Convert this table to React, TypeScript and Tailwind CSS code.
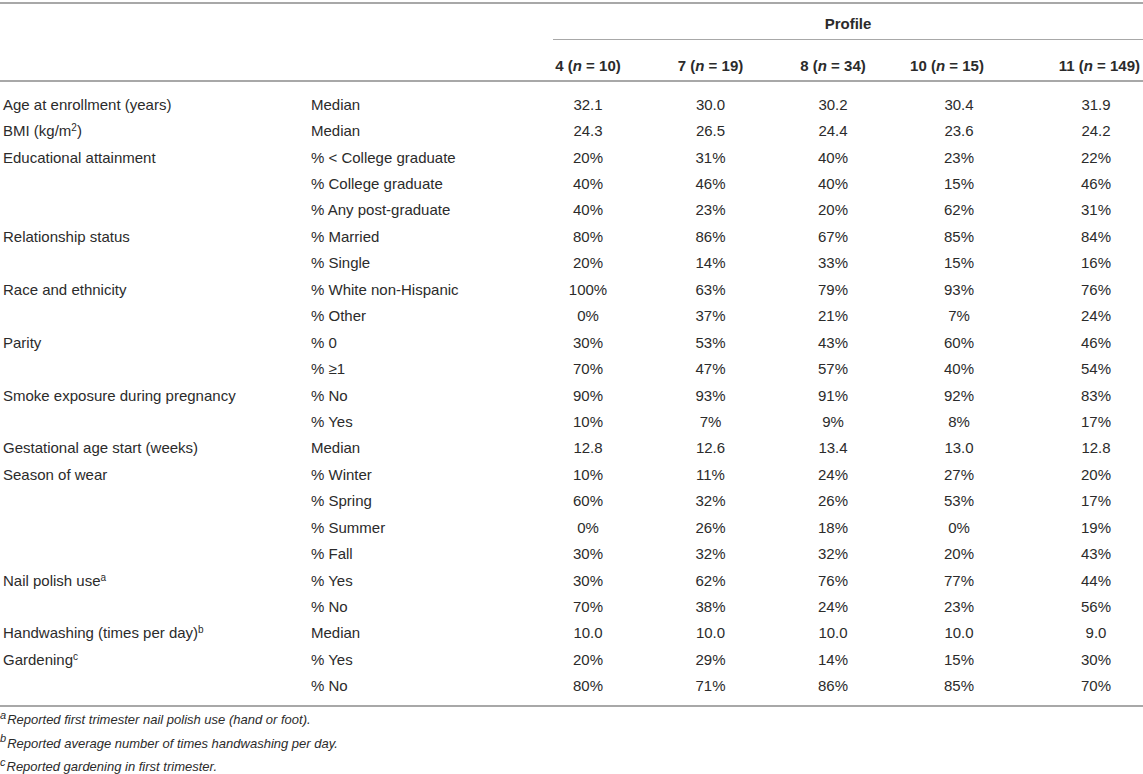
import type { ReactNode } from "react";

type Row = {
  label?: ReactNode;
  sub: ReactNode;
  values: string[];
};

const rows: Row[] = [
  { label: "Age at enrollment (years)", sub: "Median", values: ["32.1", "30.0", "30.2", "30.4", "31.9"] },
  {
    label: (
      <>
        BMI (kg/m<sup className="text-[10px]">2</sup>)
      </>
    ),
    sub: "Median",
    values: ["24.3", "26.5", "24.4", "23.6", "24.2"],
  },
  { label: "Educational attainment", sub: "% < College graduate", values: ["20%", "31%", "40%", "23%", "22%"] },
  { sub: "% College graduate", values: ["40%", "46%", "40%", "15%", "46%"] },
  { sub: "% Any post-graduate", values: ["40%", "23%", "20%", "62%", "31%"] },
  { label: "Relationship status", sub: "% Married", values: ["80%", "86%", "67%", "85%", "84%"] },
  { sub: "% Single", values: ["20%", "14%", "33%", "15%", "16%"] },
  { label: "Race and ethnicity", sub: "% White non-Hispanic", values: ["100%", "63%", "79%", "93%", "76%"] },
  { sub: "% Other", values: ["0%", "37%", "21%", "7%", "24%"] },
  { label: "Parity", sub: "% 0", values: ["30%", "53%", "43%", "60%", "46%"] },
  { sub: "% ≥1", values: ["70%", "47%", "57%", "40%", "54%"] },
  { label: "Smoke exposure during pregnancy", sub: "% No", values: ["90%", "93%", "91%", "92%", "83%"] },
  { sub: "% Yes", values: ["10%", "7%", "9%", "8%", "17%"] },
  { label: "Gestational age start (weeks)", sub: "Median", values: ["12.8", "12.6", "13.4", "13.0", "12.8"] },
  { label: "Season of wear", sub: "% Winter", values: ["10%", "11%", "24%", "27%", "20%"] },
  { sub: "% Spring", values: ["60%", "32%", "26%", "53%", "17%"] },
  { sub: "% Summer", values: ["0%", "26%", "18%", "0%", "19%"] },
  { sub: "% Fall", values: ["30%", "32%", "32%", "20%", "43%"] },
  {
    label: (
      <>
        Nail polish use<sup className="text-[10px]">a</sup>
      </>
    ),
    sub: "% Yes",
    values: ["30%", "62%", "76%", "77%", "44%"],
  },
  { sub: "% No", values: ["70%", "38%", "24%", "23%", "56%"] },
  {
    label: (
      <>
        Handwashing (times per day)<sup className="text-[10px]">b</sup>
      </>
    ),
    sub: "Median",
    values: ["10.0", "10.0", "10.0", "10.0", "9.0"],
  },
  {
    label: (
      <>
        Gardening<sup className="text-[10px]">c</sup>
      </>
    ),
    sub: "% Yes",
    values: ["20%", "29%", "14%", "15%", "30%"],
  },
  { sub: "% No", values: ["80%", "71%", "86%", "85%", "70%"] },
];

const grid = "grid grid-cols-[306px_221px_122px_123px_122px_130px_1fr]";

// per numeric column alignment tweaks (values)
const valueCls = ["text-center", "text-center", "text-center", "text-center", "text-center pl-[25px]"];

const headers = [
  { n: "4", count: "10", cls: "text-center" },
  { n: "7", count: "19", cls: "text-center" },
  { n: "8", count: "34", cls: "text-center" },
  { n: "10", count: "15", cls: "text-center pr-[24px]" },
  { n: "11", count: "149", cls: "text-right pr-[3px]" },
];

export default function App() {
  return (
    <div
      className="min-h-screen w-[1143px] bg-white pt-[2px] text-[15px] text-[#2b2b2b]"
      style={{ fontFamily: '"Liberation Sans", Arial, Helvetica, sans-serif' }}
    >
      <div className="border-t-2 border-[#a8a8a8]">
        {/* spanning header */}
        <div className={`${grid} h-[36px]`}>
          <div className="col-span-2" />
          <div className="col-span-5 ml-[26px] border-b border-[#a8a8a8] pt-[11px] text-center font-bold leading-[17px]">
            Profile
          </div>
        </div>

        {/* column headers */}
        <div className={`${grid} h-[42px] border-b-2 border-[#a8a8a8]`}>
          <div className="col-span-2" />
          {headers.map((h) => (
            <div key={h.n} className={`whitespace-nowrap pt-[17px] font-bold leading-[17px] ${h.cls}`}>
              {h.n} (<span className="italic">n</span> = {h.count})
            </div>
          ))}
        </div>

        {/* body */}
        <div className="border-b-2 border-[#a8a8a8] pb-[6px] pt-[9px]">
          {rows.map((r, i) => (
            <div key={i} className={`${grid} h-[26.45px] items-center leading-[17px]`}>
              <div className="whitespace-nowrap pl-[3px]">{r.label}</div>
              <div className="whitespace-nowrap pl-[5px]">{r.sub}</div>
              {r.values.map((v, j) => (
                <div key={j} className={valueCls[j]}>
                  {v}
                </div>
              ))}
            </div>
          ))}
        </div>
      </div>

      {/* footnotes */}
      <div className="pt-[1px] text-[13px] italic leading-[23.5px]">
        <p>
          <sup className="mr-[1px] text-[11px]">a</sup>Reported first trimester nail polish use (hand or foot).
        </p>
        <p>
          <sup className="mr-[1px] text-[11px]">b</sup>Reported average number of times handwashing per day.
        </p>
        <p>
          <sup className="mr-[1px] text-[11px]">c</sup>Reported gardening in first trimester.
        </p>
      </div>
    </div>
  );
}
